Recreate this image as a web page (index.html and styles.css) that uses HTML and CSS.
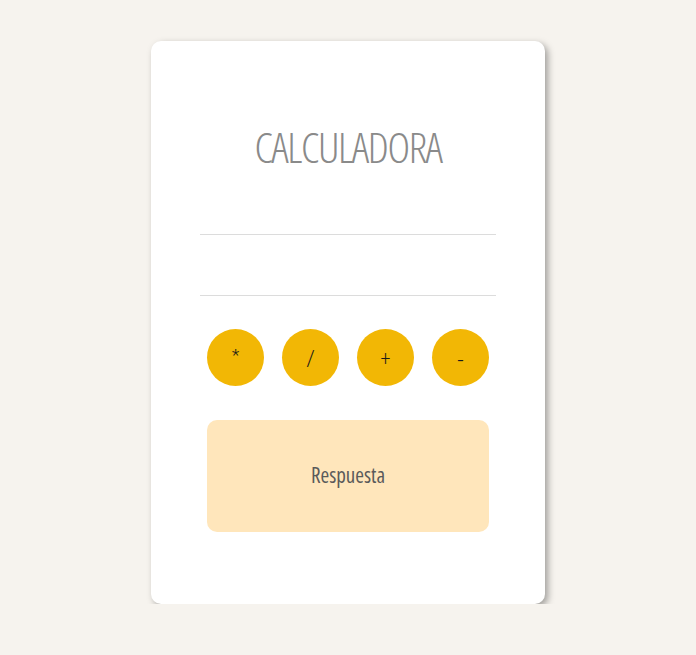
FILE: index.html
```html
<!DOCTYPE html>
<html lang="es">
<head>
<meta charset="utf-8">
<title>Calculadora</title>
<link rel="stylesheet" href="styles.css">
</head>
<body>
<main class="card">
  <h1 class="title">CALCULADORA</h1>
  <div class="fields">
    <input class="field" type="text" aria-label="Número 1">
    <input class="field" type="text" aria-label="Número 2">
  </div>
  <div class="ops">
    <button class="op">*</button>
    <button class="op">/</button>
    <button class="op">+</button>
    <button class="op">-</button>
  </div>
  <div class="answer">Respuesta</div>
</main>
</body>
</html>
```

FILE: styles.css
```css
* { box-sizing: border-box; }
html, body { margin: 0; padding: 0; }
body {
  background: #f6f3ee;
  font-family: "Open Sans", "Liberation Sans", sans-serif;
  font-stretch: 75%;
}
.card {
  width: 394px;
  height: 563px;
  margin: 41px auto 0;
  background: #fff;
  border-radius: 10px;
  box-shadow: 3px 3px 7px rgba(0,0,0,0.35);
  padding: 0 49px;
  display: flex;
  flex-direction: column;
  align-items: center;
}
.title {
  margin: 78px 0 0;
  font-size: 43px;
  font-weight: 340;
  line-height: 56px;
  color: #8a8a8a;
  letter-spacing: -1.4px;
}
.fields {
  width: 100%;
  display: flex;
  flex-direction: column;
  margin-top: 5px;
}
.field {
  width: 100%;
  height: 55px;
  border: none;
  border-bottom: 1px solid #dcdcdc;
  outline: none;
  background: transparent;
  font-family: inherit;
  font-size: 20px;
}
.field + .field { height: 61px; }
.ops {
  display: flex;
  gap: 18px;
  margin-top: 33px;
}
.op {
  width: 57px;
  height: 57px;
  border-radius: 50%;
  border: none;
  background: #f2b705;
  color: #1a1a1a;
  font-family: inherit;
  font-stretch: 75%;
  font-size: 24px;
  font-weight: 300;
  padding: 0;
}
.answer {
  margin-top: 34px;
  width: 282px;
  height: 112px;
  border-radius: 10px;
  background: #ffe6bb;
  color: #5a5a5a;
  font-size: 21px;
  padding-bottom: 3px;
  display: flex;
  align-items: center;
  justify-content: center;
}
```
